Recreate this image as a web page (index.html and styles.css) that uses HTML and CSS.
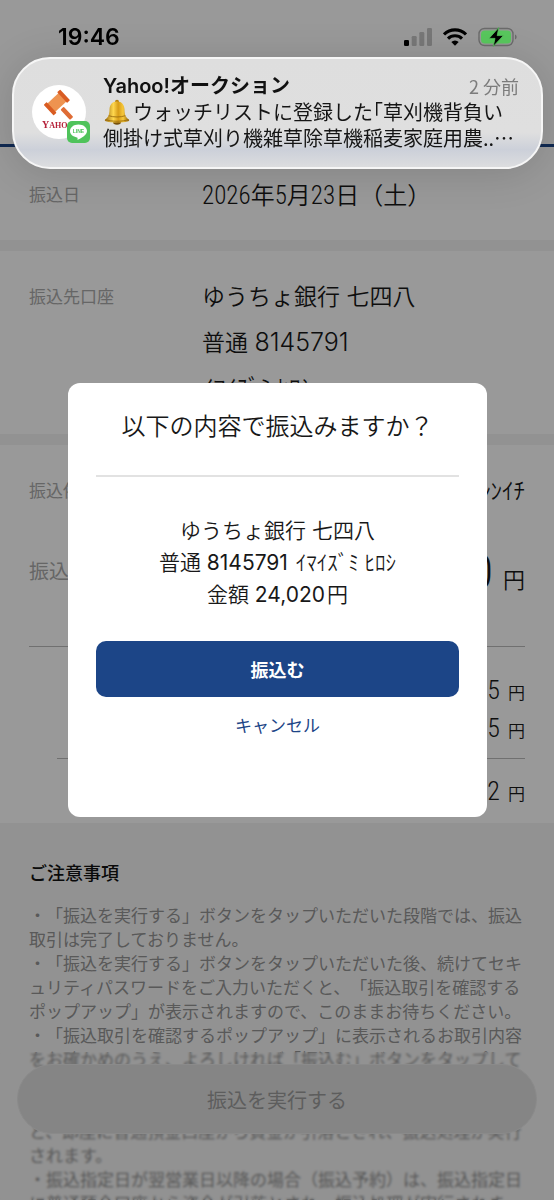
FILE: index.html
```html
<!DOCTYPE html>
<html lang="ja">
<head>
<meta charset="utf-8">
<meta name="viewport" content="width=device-width, initial-scale=1">
<title>振込内容の確認</title>
<link rel="stylesheet" href="styles.css">
</head>
<body>
<div class="screen">
  <main class="page">
    <header class="page-header"></header>

    <section class="row row-date">
      <span class="label">振込日</span>
      <span class="value"><span class="narrow">2026</span>年<span class="narrow">5</span>月<span class="narrow">23</span>日（土）</span>
    </section>

    <section class="row row-account">
      <span class="label">振込先口座</span>
      <div class="value">
        <p>ゆうちょ銀行 七四八</p>
        <p>普通 <span class="wide">8145791</span></p>
        <p>ｲﾏｲｽﾞﾐ ﾋﾛｼ</p>
      </div>
    </section>

    <section class="summary">
      <div class="pair pair-name"><span class="label">振込依頼人</span><span class="value">ｼﾝｲﾁ</span></div>
      <div class="pair pair-amount"><span class="label">振込金額</span><span class="amount"><span class="big">24,020</span><span class="yen">円</span></span></div>
      <div class="fees">
        <p class="fee"><span class="fee-num">5</span>円</p>
        <p class="fee"><span class="fee-num">5</span>円</p>
      </div>
      <div class="total">
        <p class="fee"><span class="fee-num">2</span>円</p>
      </div>
    </section>

    <section class="notes">
      <h2>ご注意事項</h2>
      <p>・「振込を実行する」ボタンをタップいただいた段階では、振込取引は完了しておりません。</p>
      <p>・「振込を実行する」ボタンをタップいただいた後、続けてセキュリティパスワードをご入力いただくと、「振込取引を確認するポップアップ」が表示されますので、このままお待ちください。</p>
      <p>・「振込取引を確認するポップアップ」に表示されるお取引内容をお確かめのうえ、よろしければ「振込む」ボタンをタップしてください。</p>
      <p>・振込指定日が当日の場合、「振込む」ボタンをタップいただくと、即座に普通預金口座から資金が引落とされ、振込処理が実行されます。</p>
      <p>・振込指定日が翌営業日以降の場合（振込予約）は、振込指定日に普通預金口座から資金が引落とされ、振込処理が実行されます。</p>
    </section>
  </main>

  <footer class="action-bar">
    <button class="submit" type="button" disabled>振込を実行する</button>
  </footer>

  <div class="overlay">
    <div class="modal" role="dialog" aria-labelledby="modal-title">
      <h1 id="modal-title">以下の内容で振込みますか？</h1>
      <div class="detail">
        <p>ゆうちょ銀行 七四八</p>
        <p>普通 <span class="num">8145791</span> ｲﾏｲｽﾞﾐ ﾋﾛｼ</p>
        <p>金額 <span class="num">24,020</span>円</p>
      </div>
      <button class="confirm" type="button">振込む</button>
      <button class="cancel" type="button">キャンセル</button>
    </div>
  </div>

  <div class="status-bar">
    <time>19:46</time>
    <div class="status-icons">
      <svg width="28" height="18" viewBox="0 0 28 18">
        <rect x="0" y="12" width="5" height="6" rx="1.3" fill="#000"/>
        <rect x="7.7" y="8" width="5" height="10" rx="1.3" fill="#777"/>
        <rect x="15.3" y="4" width="5" height="14" rx="1.3" fill="#777"/>
        <rect x="23" y="0" width="5" height="18" rx="1.3" fill="#777"/>
      </svg>
      <svg width="24" height="18" viewBox="0 0 24 18" fill="none" stroke="#000" stroke-width="3.1">
        <path d="M1 6.4a15.6 15.6 0 0 1 22 0"/>
        <path d="M5 10.6a10 10 0 0 1 14 0"/>
        <path d="M12 17.8l-3.7-3.8a5.3 5.3 0 0 1 7.4 0z" fill="#000" stroke="none"/>
      </svg>
      <svg width="40" height="20" viewBox="0 0 40 20">
        <rect x="1" y="1.5" width="34" height="17" rx="5.5" fill="none" stroke="#6b6b6b" stroke-width="1.4"/>
        <rect x="3" y="3.5" width="30" height="13" rx="3.8" fill="#58c75d"/>
        <path d="M37 7.5c2.2.8 2.2 4.2 0 5z" fill="#6b6b6b"/>
        <path d="M20.8.6L11 11.4h6l-1.800 8L25.400 8.600h-6.200z" fill="#000" stroke="#58c75d" stroke-width=".8"/>
      </svg>
    </div>
  </div>

  <aside class="notification">
    <div class="avatar">
      <svg width="60" height="60" viewBox="0 0 60 60">
        <circle cx="27" cy="27" r="27" fill="#fff"/>
        <g transform="translate(24.500 17.500) rotate(-43)">
          <rect x="-2" y="8" width="4.500" height="14" rx="1" fill="#df6c35"/>
          <rect x="-8" y="-5.500" width="16" height="11.500" fill="#ee9350"/>
          <rect x="-11" y="-7" width="4" height="14.500" rx=".6" fill="#d95c22"/>
          <rect x="7.500" y="-7" width="4" height="14.500" rx=".6" fill="#d95c22"/>
        </g>
        <text x="10" y="43" class="logo-text">Y<tspan class="logo-small">AHOO!</tspan></text>
        <rect x="35" y="36" width="23" height="22" rx="5" fill="#4fc35b"/>
        <path d="M46.500 39.500c-4.900 0-8.500 2.900-8.500 6.600 0 3.300 2.900 5.800 7 6.400.9.200.5 1.300.5 2.600 3.300-1.500 9.500-4.900 9.500-9 0-3.700-3.600-6.600-8.500-6.600z" fill="#fff"/>
        <text x="46.500" y="48.200" class="line-text">LINE</text>
      </svg>
    </div>
    <div class="message">
      <div class="message-head"><strong>Yahoo!オークション</strong><time>2 分前</time></div>
      <p><svg class="bell" width="28" height="26" viewBox="0 0 28 26">
        <defs><linearGradient id="gold" x1="0" x2="1"><stop offset="0" stop-color="#9a6a0c"/><stop offset=".35" stop-color="#ffd84f"/><stop offset=".55" stop-color="#d79c17"/><stop offset=".75" stop-color="#f7c83b"/><stop offset="1" stop-color="#8a5c08"/></linearGradient></defs>
        <ellipse cx="14" cy="23" rx="4" ry="2.700" fill="#76500b"/>
        <circle cx="14" cy="2.700" r="2" fill="#b5810f"/>
        <path d="M14 2.500c-5 0-7.300 3.500-7.500 8-.2 5.500-1 7.500-4.500 10.300C1 22 4 23.500 14 23.500s13-1.500 12-2.700c-3.500-2.800-4.300-4.800-4.500-10.300-.2-4.500-2.500-8-7.500-8z" fill="url(#gold)"/>
        <path d="M2.500 20.600c6 2.200 17 2.200 23 0M5.700 16.700c5 1.700 11.600 1.700 16.600 0" fill="none" stroke="#9b6d10" stroke-width=".9"/>
      </svg>ウォッチリストに登録した<span class="half">「</span>草刈機背負い</p>
      <p>側掛け式草刈り機雑草除草機稲麦家庭用農..⋯</p>
    </div>
  </aside>
</div>
</body>
</html>
```

FILE: styles.css
```css
* { box-sizing: border-box; }
body, p, h1, h2 { margin: 0; }
body {
  font-family: "Liberation Sans", "Noto Sans CJK JP", sans-serif;
  color: #181818;
  background: #f3f3f3;
  text-spacing-trim: space-all;
}
button { font-family: inherit; border: 0; padding: 0; cursor: pointer; }

.screen { position: relative; height: 100vh; overflow: hidden; }

.page { background: #fff; font-weight: 350; }
.page-header { height: 147px; border-bottom: 3px solid #1c4587; }
.label { font-size: 17px; color: #aaa; font-weight: 400; }
.value { font-size: 23px; }
.narrow { font-family: "Roboto Condensed", "Liberation Sans Narrow", "Noto Sans CJK JP", sans-serif; font-size: 25px; font-weight: 300; }
.wide { font-family: Inter, sans-serif; font-size: 25px; font-weight: 300; }

.row {
  display: grid;
  grid-template-columns: 173px 1fr;
  padding: 24px 29px 23px;
  line-height: 45px;
  border-bottom: 11px solid #f3f3f3;
}
.row-date { padding: 31px 29px 26px; line-height: 36px; }
.row-date .value { font-size: 24px; }

.summary { padding: 24px 29px 13px; }
.pair { display: flex; justify-content: space-between; }
.pair-name { line-height: 45px; }
.pair-amount {
  height: 133px;
  padding-top: 28px;
  line-height: 60px;
  border-bottom: 1px solid #bbb;
}
.pair-amount .label { font-size: 20px; }
.amount { display: flex; align-items: baseline; gap: 10px; }
.big { font-family: "Roboto Condensed", "Liberation Sans Narrow", "Noto Sans CJK JP", sans-serif; font-size: 48px; font-weight: 300; }
.yen { font-size: 22px; }
.fees { padding: 24px 0 11px; margin-left: 28px; border-bottom: 1px solid #bbb; }
.total { padding-top: 13px; }
.fee { display: flex; justify-content: flex-end; align-items: baseline; gap: 8px; height: 38px; font-size: 17px; line-height: 38px; }
.fee-num { font-family: "Roboto Condensed", "Liberation Sans Narrow", "Noto Sans CJK JP", sans-serif; font-size: 26px; font-weight: 300; }

.notes { padding: 37px 29px 0; background: #f3f3f3; color: #949494; font-size: 17px; line-height: 24px; font-weight: 400; }
.notes h2 { margin-bottom: 17px; font-size: 18px; line-height: 28px; font-weight: 500; color: #111; }

.action-bar {
  position: absolute;
  left: 0;
  right: 0;
  bottom: 0;
  padding: 12px 17px 66px;
  backdrop-filter: blur(1px);
}
.submit {
  display: block;
  width: 100%;
  height: 70px;
  border-radius: 35px;
  border: 1px solid #e6e6e6;
  background: #dedede;
  color: #9c9c9c;
  font-size: 20px;
}

.overlay {
  position: absolute;
  inset: 0;
  display: flex;
  align-items: center;
  padding: 0 67px 0 68px;
  background: rgba(0, 0, 0, .4);
}
.modal {
  flex: 1;
  padding: 24px 28px 76px;
  border-radius: 12px;
  background: #fff;
  text-align: center;
}
.modal h1 {
  padding-bottom: 28px;
  border-bottom: 2px solid #e2e2e2;
  font-size: 24px;
  line-height: 40px;
  font-weight: 350;
}
.detail { padding: 38px 0 30px; font-size: 21px; line-height: 32px; font-weight: 350; }
.num { margin-right: 2px; font-family: Inter, sans-serif; font-size: 21px; font-weight: 400; }
.confirm {
  display: block;
  width: 100%;
  height: 56px;
  border-radius: 10px;
  background: #1c4587;
  color: #fff;
  font-size: 18px;
  font-weight: 700;
}
.cancel { margin-top: 16px; background: none; color: #1c4587; font-size: 17px; line-height: 28px; }

.status-bar {
  position: absolute;
  inset: 0 0 auto;
  display: flex;
  justify-content: space-between;
  align-items: center;
  padding: 22px 36px 0 58px;
  font: 600 23px/30px Inter, sans-serif;
  color: #000;
}
.status-icons { display: flex; align-items: center; gap: 11px; }

.notification {
  position: absolute;
  top: 57px;
  left: 12px;
  right: 11px;
  display: flex;
  gap: 11px;
  padding: 14px 22px 16px 18px;
  border: 2px solid #f6f6f6;
  border-radius: 38px;
  background: linear-gradient(#dedede 0%, #dfdfdf 68%, #ccd0d9 84%, #dcdddf 100%);
  box-shadow: 0 4px 40px rgba(0, 0, 0, .14);
  color: #151515;
}
.avatar { width: 60px; padding-top: 12px; }
.avatar svg { display: block; }
.message { flex: 1; font: 400 20px/26px "Noto Sans CJK JP", sans-serif; white-space: nowrap; }
.message-head { display: flex; justify-content: space-between; }
.message-head strong { font-family: Inter, "Noto Sans CJK JP", sans-serif; font-weight: 600; color: #111; }
.message-head time { font-size: 18px; color: #7c7c7c; }
.bell { margin-right: 2px; vertical-align: top; }
.half { font-feature-settings: "halt"; }
.logo-text { font: 700 10px "Liberation Serif", serif; fill: #b5223a; }
.logo-small { font-size: 8px; }
.line-text { font: 700 5px "Liberation Sans", sans-serif; fill: #4fc35b; text-anchor: middle; }
```
